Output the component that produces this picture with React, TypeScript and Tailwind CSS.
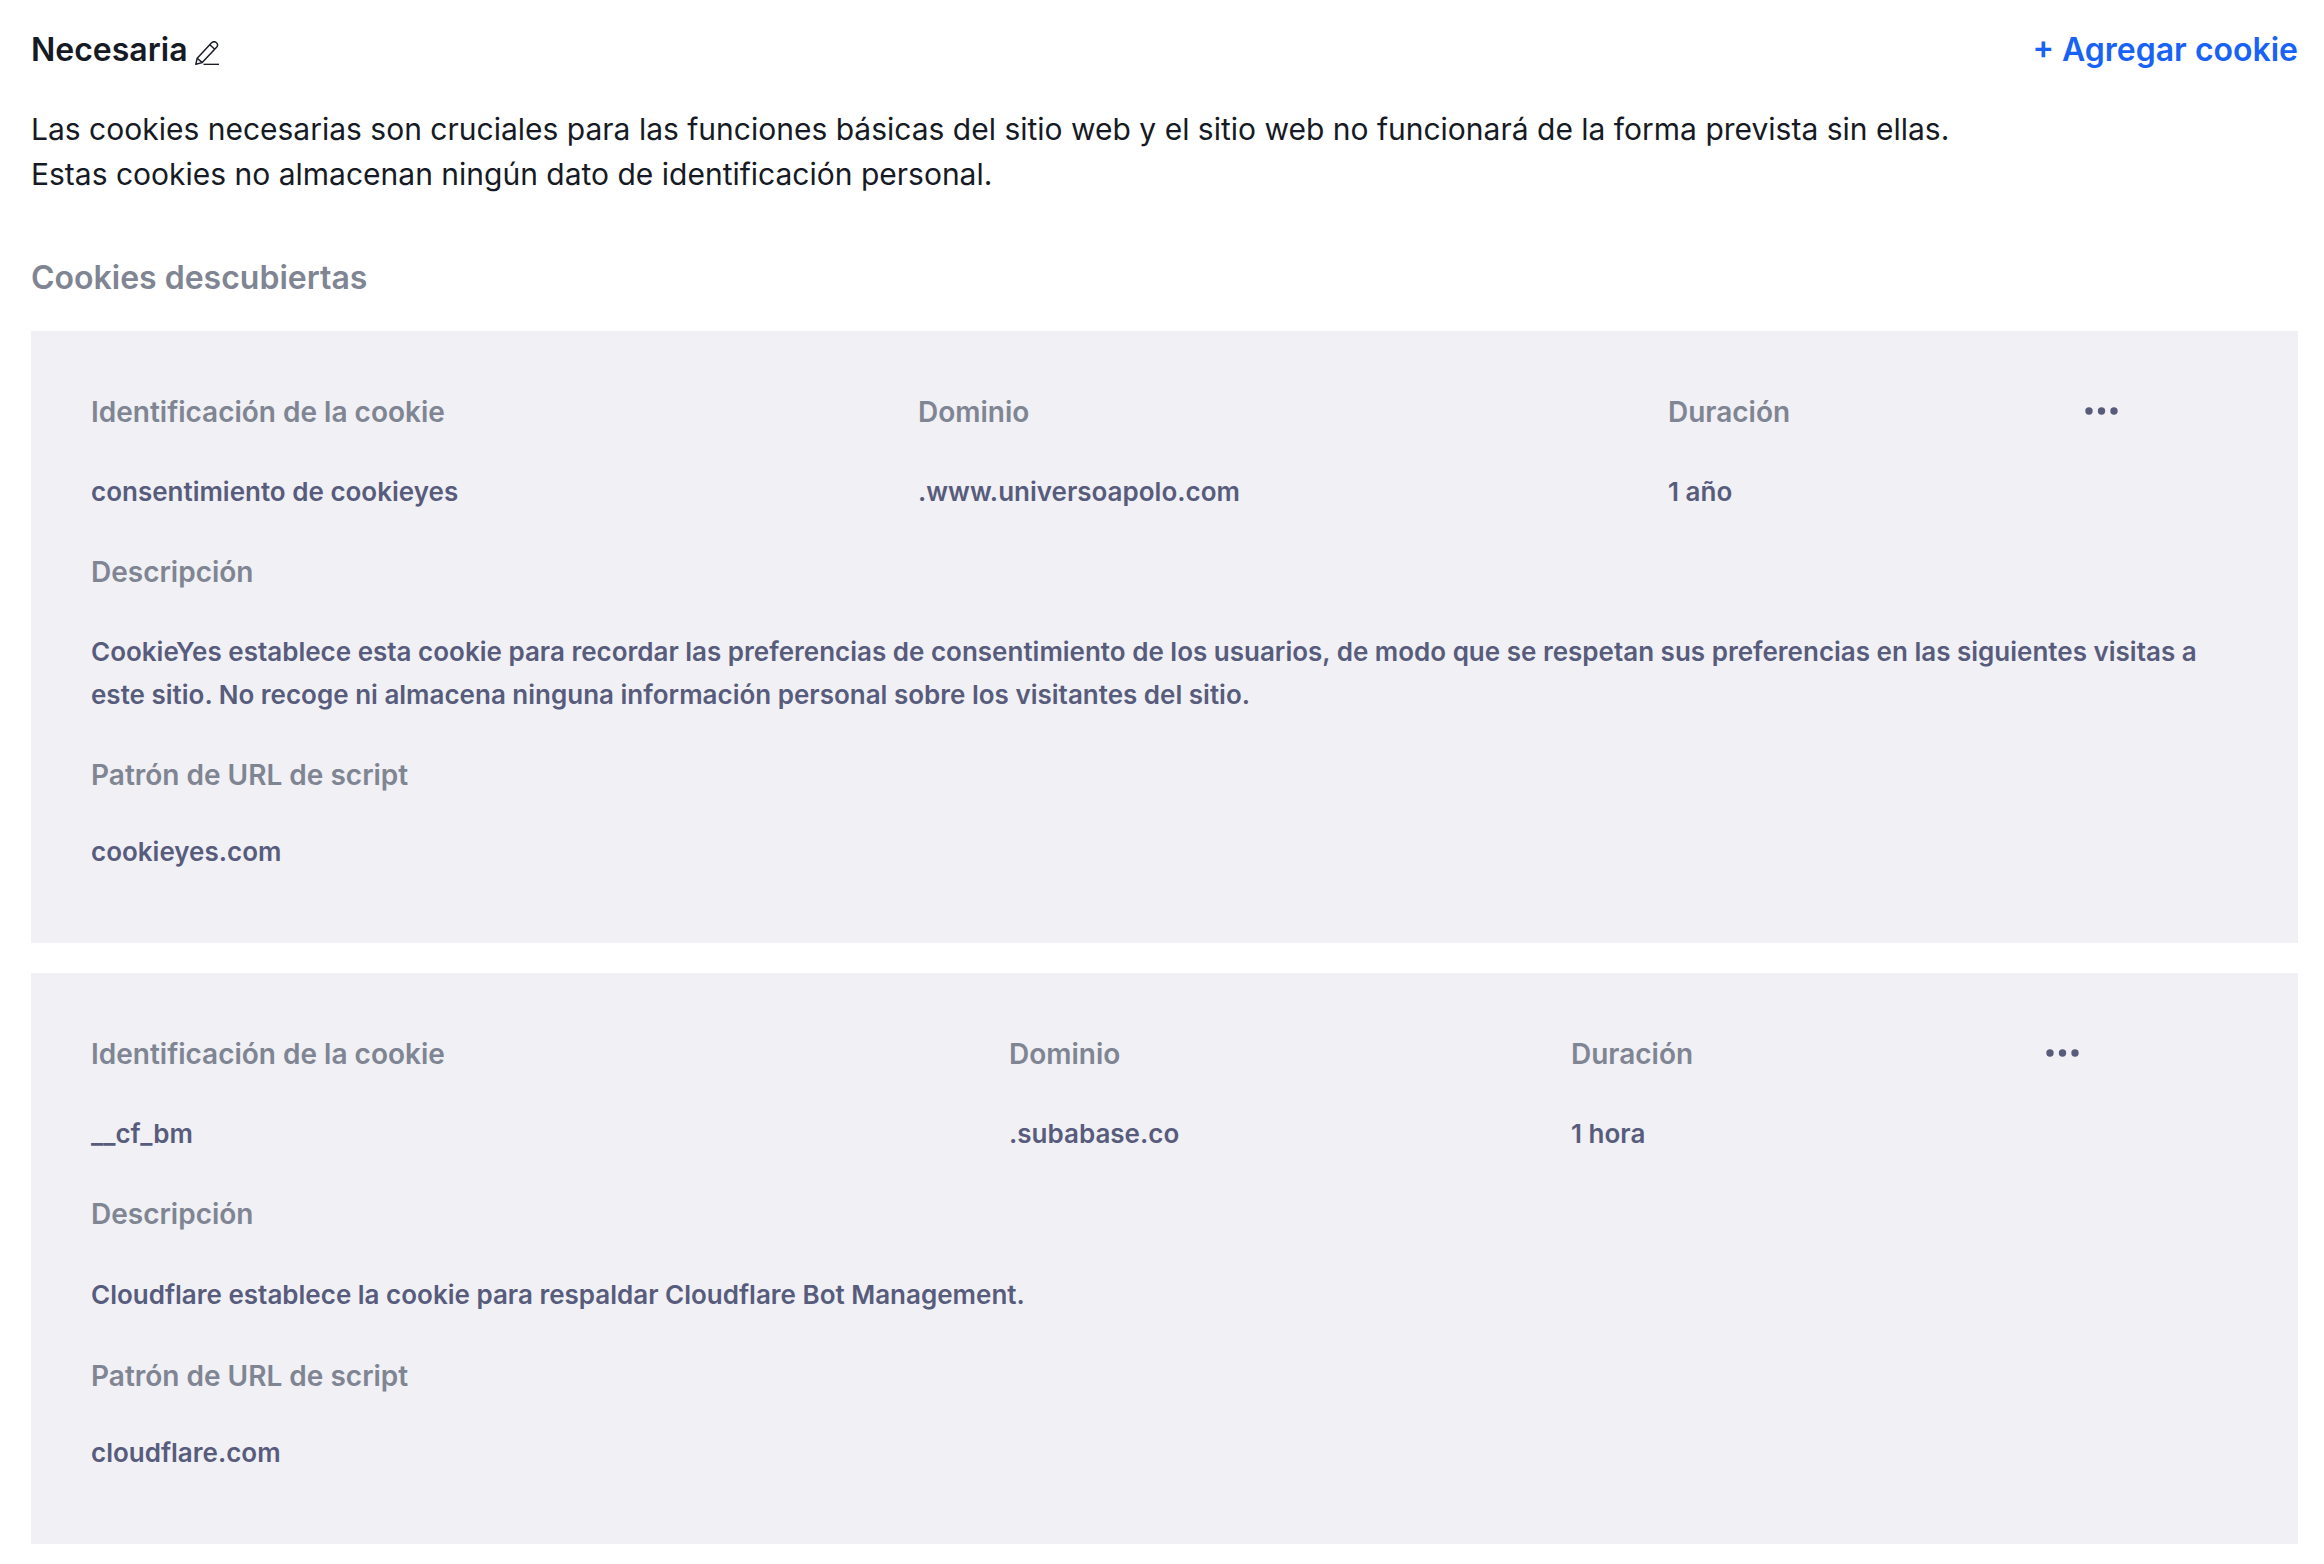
const ink = "text-[#585c7c]";

function Dots() {
  return (
    <svg width="34" height="8" viewBox="0 0 34 8" className="block ml-[1px] mb-[3px]" aria-hidden="true">
      <circle cx="4" cy="4" r="3.7" fill="#585b79" />
      <circle cx="16.5" cy="4" r="3.7" fill="#585b79" />
      <circle cx="29" cy="4" r="3.7" fill="#585b79" />
    </svg>
  );
}

function Pencil() {
  return (
    <svg width="24" height="24" viewBox="0 0 24 24" fill="none" stroke="#1a1d27" strokeWidth="1.5" aria-hidden="true" className="block">
      <path d="M0.8 23.3 L2.2 17.2 L16.6 1.8 C17.8 0.6 19.6 0.4 21.2 1.5 C22.8 2.8 23 4.6 21.8 6 L7.2 21.6 Z" strokeLinejoin="round" />
      <path d="M2.2 17.2 L7.2 21.6 M14.8 3.8 L19.8 8.2" />
      <path d="M8.5 23.4 H24" />
    </svg>
  );
}

function Label({ children }: { children: React.ReactNode }) {
  return <div className="text-[28px] leading-[41px] font-semibold text-[#7f8592]">{children}</div>;
}

function Value({ children }: { children: React.ReactNode }) {
  return <div className={`text-[26px] leading-[43px] font-semibold ${ink}`}>{children}</div>;
}

function Card({ cols, id, domain, duration, description, pattern, descGap, patternGap }: {
  cols: string; id: string; domain: string; duration: string; description: React.ReactNode; pattern: string; descGap: string; patternGap: string;
}) {
  return (
    <section className="bg-[#f0f0f5] pl-[60px] pr-[60px] pt-[61px] pb-[70px]">
      <div className={`grid ${cols} items-center`}>
        <Label>Identificación de la cookie</Label>
        <Label>Dominio</Label>
        <Label>Duración</Label>
        <Dots />
      </div>
      <div className={`grid ${cols} mt-[37px] items-center`}>
        <Value>{id}</Value>
        <Value>{domain}</Value>
        <Value>{duration}</Value>
        <div />
      </div>
      <div className="mt-[39px]"><Label>Descripción</Label></div>
      <div className={descGap}><Value>{description}</Value></div>
      <div className={patternGap}><Label>Patrón de URL de script</Label></div>
      <div className="mt-[34px]"><Value>{pattern}</Value></div>
    </section>
  );
}

export default function App() {
  return (
    <div className="w-[2324px] h-[1564px] bg-white pl-[31px] pr-[26px] font-['Inter',sans-serif] overflow-hidden">
      <header className="flex items-center justify-between pt-[30px]">
        <div className="flex items-center gap-[7px]">
          <h1 className="text-[32px] leading-[40px] font-semibold text-[#161a24]">Necesaria</h1>
          <span className="mt-[6px]"><Pencil /></span>
        </div>
        <button className="text-[32px] leading-[40px] font-semibold text-[#1863f6]">+ Agregar cookie</button>
      </header>
      <p className="mt-[37px] text-[30px] leading-[45px] text-[#161a24]">
        Las cookies necesarias son cruciales para las funciones básicas del sitio web y el sitio web no funcionará de la forma prevista sin ellas.
        <br />
        Estas cookies no almacenan ningún dato de identificación personal.
      </p>
      <h2 className="mt-[61px] text-[32px] leading-[40px] font-semibold text-[#7f8592]">Cookies descubiertas</h2>
      <div className="mt-[33px] flex flex-col gap-[30px]">
        <Card
          cols="grid-cols-[827px_750px_416px_1fr]"
          id="consentimiento de cookieyes"
          domain=".www.universoapolo.com"
          duration="1 año"
          description={<>CookieYes establece esta cookie para recordar las preferencias de consentimiento de los usuarios, de modo que se respetan sus preferencias en las siguientes visitas a este sitio. No recoge ni almacena ninguna información personal sobre los visitantes del sitio.</>}
          pattern="cookieyes.com"
          descGap="mt-[37px]"
          patternGap="mt-[39px]"
        />
        <Card
          cols="grid-cols-[918px_562px_474px_1fr]"
          id="__cf_bm"
          domain=".subabase.co"
          duration="1 hora"
          description="Cloudflare establece la cookie para respaldar Cloudflare Bot Management."
          pattern="cloudflare.com"
          descGap="mt-[38px]"
          patternGap="mt-[40px]"
        />
      </div>
    </div>
  );
}
